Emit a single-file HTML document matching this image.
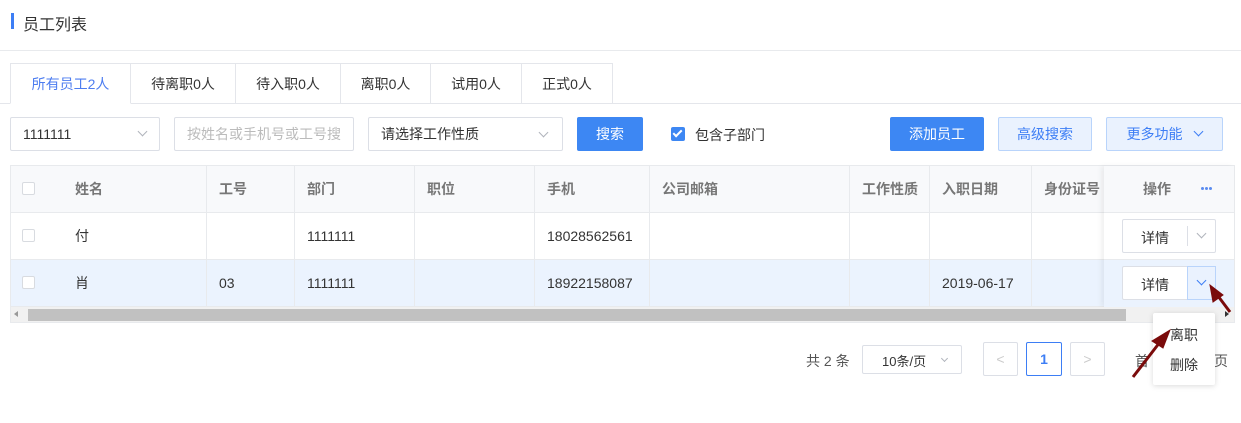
<!DOCTYPE html><html><head><meta charset="utf-8"><style>
*{box-sizing:border-box;margin:0;padding:0}
body{width:1241px;height:423px;background:#fff;font-family:"Liberation Sans","Noto Sans CJK SC",sans-serif;font-size:14px;color:#333;position:relative;overflow:hidden}
.a{position:absolute}
.t{white-space:nowrap}
.tab{position:absolute;top:63px;height:41px;border:1px solid #e4e6eb;border-left:none;line-height:40px;text-align:center;font-size:14px;color:#333;background:#fff}
.inp{position:absolute;top:117px;height:34px;border:1px solid #dcdfe6;border-radius:2px;line-height:32px;padding-left:12px;font-size:14px}
.chev{position:absolute;width:7px;height:7px;border-right:1px solid #b0b4bc;border-bottom:1px solid #b0b4bc;transform:rotate(45deg)}
.btn{position:absolute;top:117px;height:34px;border-radius:2px;line-height:34px;text-align:center;font-size:14px}
.cell{position:absolute;border-right:1px solid #e8eaed;height:100%;top:0;padding-left:12px;line-height:46px;white-space:nowrap;overflow:hidden}
.row{position:absolute;left:11px;width:1223px;height:47px;border-bottom:1px solid #e8eaed}
.cb{position:absolute;left:11px;top:16px;width:13px;height:13px;border:1px solid #d8dbe0;border-radius:2px;background:#fff}
.hd .cell{color:#777;font-weight:bold}
.dot{position:absolute;top:21px;width:3px;height:3px;border-radius:50%;background:#5b8cf0}
</style></head><body>
<div class="a" style="left:11px;top:13px;width:3px;height:16px;background:#3d7ef5"></div>
<div class="a t" style="left:23px;top:11px;font-size:16px;color:#333">员工列表</div>
<div class="a" style="left:0;top:50px;width:1241px;height:1px;background:#e8eaed"></div>
<div class="a" style="left:0;top:103px;width:1241px;height:1px;background:#e4e6eb"></div>
<div class="tab" style="left:10px;width:121px;border-left:1px solid #e4e6eb;border-bottom-color:#fff;color:#4d7df0">所有员工2人</div>
<div class="tab" style="left:131px;width:105px">待离职0人</div>
<div class="tab" style="left:236px;width:105px">待入职0人</div>
<div class="tab" style="left:341px;width:90px">离职0人</div>
<div class="tab" style="left:431px;width:91px">试用0人</div>
<div class="tab" style="left:522px;width:91px">正式0人</div>

<div class="inp" style="left:10px;width:150px;color:#333">1111111<div class="chev" style="left:128px;top:10px"></div></div>
<div class="inp" style="left:174px;width:180px;color:#bbb;overflow:hidden;white-space:nowrap">按姓名或手机号或工号搜</div>
<div class="inp" style="left:368px;width:195px;color:#333">请选择工作性质<div class="chev" style="left:171px;top:11px"></div></div>
<div class="btn" style="left:577px;width:66px;background:#3d87f3;color:#fff">搜索</div>
<div class="a" style="left:671px;top:127px;width:14px;height:14px;background:#3d87f3;border-radius:2px"><div class="a" style="left:4px;top:1px;width:5px;height:9px;border-right:2px solid #fff;border-bottom:2px solid #fff;transform:rotate(45deg)"></div></div>
<div class="a t" style="left:695px;top:125px">包含子部门</div>
<div class="btn" style="left:890px;width:94px;background:#3d87f3;color:#fff">添加员工</div>
<div class="btn" style="left:998px;width:94px;background:#eaf2fe;border:1px solid #b9d4fb;color:#3d7ef5;line-height:32px">高级搜索</div>
<div class="btn" style="left:1106px;width:117px;background:#eaf2fe;border:1px solid #b9d4fb;color:#3d7ef5;line-height:32px;padding-right:20px">更多功能<div class="chev" style="left:88px;top:10px;border-color:#3d7ef5"></div></div>

<div class="a" style="left:10px;top:165px;width:1225px;height:158px;border:1px solid #e8eaed"></div>
<div class="row hd" style="top:166px;background:#f8f9fb"><div class="cb"></div>
<div class="cell" style="left:52px;width:144px">姓名</div>
<div class="cell" style="left:196px;width:88px">工号</div>
<div class="cell" style="left:284px;width:120px">部门</div>
<div class="cell" style="left:404px;width:120px">职位</div>
<div class="cell" style="left:524px;width:115px">手机</div>
<div class="cell" style="left:639px;width:200px">公司邮箱</div>
<div class="cell" style="left:839px;width:80px">工作性质</div>
<div class="cell" style="left:919px;width:102px">入职日期</div>
<div class="cell" style="left:1021px;width:100px">身份证号</div>
</div>
<div class="row" style="top:213px;background:#fff"><div class="cb"></div>
<div class="cell" style="left:52px;width:144px">付</div>
<div class="cell" style="left:196px;width:88px"></div>
<div class="cell" style="left:284px;width:120px">1111111</div>
<div class="cell" style="left:404px;width:120px"></div>
<div class="cell" style="left:524px;width:115px">18028562561</div>
<div class="cell" style="left:639px;width:200px"></div>
<div class="cell" style="left:839px;width:80px"></div>
<div class="cell" style="left:919px;width:102px"></div>
</div>
<div class="row" style="top:260px;background:#ebf3fe"><div class="cb"></div>
<div class="cell" style="left:52px;width:144px">肖</div>
<div class="cell" style="left:196px;width:88px">03</div>
<div class="cell" style="left:284px;width:120px">1111111</div>
<div class="cell" style="left:404px;width:120px"></div>
<div class="cell" style="left:524px;width:115px">18922158087</div>
<div class="cell" style="left:639px;width:200px"></div>
<div class="cell" style="left:839px;width:80px"></div>
<div class="cell" style="left:919px;width:102px">2019-06-17</div>
</div>
<div class="a" style="left:1104px;top:166px;width:130px;height:141px;box-shadow:-3px 0 5px rgba(0,0,0,0.06)">
<div class="a" style="left:0;top:0;width:130px;height:47px;background:#f8f9fb;border-bottom:1px solid #e8eaed"><span class="a t" style="left:39px;top:13px;color:#777;font-weight:bold">操作</span><div class="dot" style="left:97px"></div><div class="dot" style="left:101px"></div><div class="dot" style="left:105px"></div></div>
<div class="a" style="left:0;top:47px;width:130px;height:47px;background:#fff;border-bottom:1px solid #e8eaed"><div class="a" style="left:18px;top:6px;width:94px;height:34px;border:1px solid #dcdfe6;border-radius:2px;background:#fff"><span class="a t" style="left:18px;top:8px">详情</span><div class="a" style="left:64px;top:6px;width:1px;height:20px;background:#dcdfe6"></div><div class="chev" style="left:75px;top:10px"></div></div></div>
<div class="a" style="left:0;top:94px;width:130px;height:47px;background:#ebf3fe"><div class="a" style="left:18px;top:6px;width:94px;height:34px;border:1px solid #dcdfe6;border-radius:2px;background:#fff"><span class="a t" style="left:18px;top:8px">详情</span><div class="a" style="left:64px;top:-1px;width:29px;height:34px;background:#eaf2fe;border:1px solid #b9d4fb"></div><div class="chev" style="left:75px;top:10px;border-color:#3d7ef5"></div></div></div>
</div>
<div class="a" style="left:11px;top:307px;width:1223px;height:15px;background:#f1f1f1"></div>
<div class="a" style="left:28px;top:309px;width:1098px;height:12px;background:#c1c1c1"></div>
<div class="a" style="left:14px;top:311px;border:3px solid transparent;border-right:4px solid #999;border-left:none"></div>
<div class="a" style="left:1225px;top:311px;border:3px solid transparent;border-left:4px solid #333;border-right:none"></div>

<div class="a t" style="left:806px;top:351px;color:#555">共 2 条</div>
<div class="a" style="left:862px;top:345px;width:100px;height:29px;border:1px solid #dcdfe6;border-radius:2px"><span class="a t" style="left:19px;top:5px;font-size:13px">10条/页</span><div class="chev" style="left:79px;top:10px;width:5px;height:5px"></div></div>
<div class="a" style="left:983px;top:342px;width:35px;height:34px;border:1px solid #dcdfe6;border-radius:2px;color:#ccc;text-align:center;line-height:32px">&lt;</div>
<div class="a" style="left:1026px;top:342px;width:36px;height:34px;border:1px solid #3d7ef5;border-radius:2px;color:#3d7ef5;text-align:center;line-height:32px;font-weight:bold">1</div>
<div class="a" style="left:1070px;top:342px;width:35px;height:34px;border:1px solid #dcdfe6;border-radius:2px;color:#ccc;text-align:center;line-height:32px">&gt;</div>
<div class="a t" style="left:1135px;top:351px;color:#555">首</div>
<div class="a t" style="left:1214px;top:351px;color:#555">页</div>
<div class="a" style="left:1153px;top:313px;width:62px;height:72px;background:#fff;box-shadow:0 1px 6px rgba(0,0,0,0.15);border-radius:2px"><span class="a t" style="left:17px;top:12px">离职</span><span class="a t" style="left:17px;top:42px">删除</span></div>
<svg class="a" style="left:0;top:0" width="1241" height="423"><g fill="#7a0b0b" stroke="#7a0b0b">
<line x1="1133" y1="377" x2="1160" y2="342" stroke-width="3"/><polygon points="1170,330 1152,341 1163,348"/>
<line x1="1230" y1="312" x2="1218" y2="296" stroke-width="3"/><polygon points="1210,285 1213,302 1223,295"/></g></svg>
</body></html>
